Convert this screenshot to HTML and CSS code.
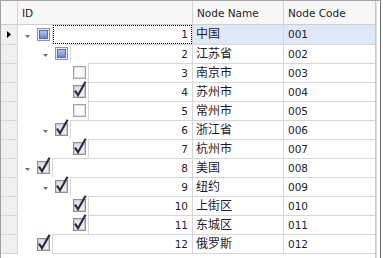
FILE: index.html
```html
<!DOCTYPE html>
<html lang="zh">
	<head>
		<meta charset="UTF-8" />
		<title>Tree List</title>
		<link rel="stylesheet" href="styles.css">
	</head>

	<body>
		<svg class="defs" width="0" height="0">
			<defs>
				<linearGradient id="blue" x1="0" y1="0" x2="0" y2="1">
					<stop offset="0" stop-color="#b4c8f4" />
					<stop offset="1" stop-color="#5f82d6" />
				</linearGradient>
				<linearGradient id="grey" x1="0" y1="0" x2="0" y2="1">
					<stop offset="0" stop-color="#dcdde4" />
					<stop offset="1" stop-color="#f4f4f6" />
				</linearGradient>
			</defs>
			<symbol id="cb-off" viewBox="0 0 13 13" overflow="visible">
				<rect x="0.5" y="0.5" width="12" height="12" fill="#fff" stroke="#a4a4a8" />
				<rect x="1.5" y="1.5" width="10" height="10" fill="#fbfbfb" stroke="#e0e0e2" />
			</symbol>
			<symbol id="cb-on" viewBox="0 0 13 13" overflow="visible">
				<rect x="0.5" y="0.5" width="12" height="12" fill="url(#grey)" stroke="#8e8f9c" />
				<rect x="1.5" y="1.5" width="10" height="10" fill="none" stroke="#cdcdd4" />
				<path d="M2 5.6 L5 10.2 L12.6 -3.2" fill="none" stroke="#2c2c3c" stroke-width="2.2" />
			</symbol>
			<symbol id="cb-mid" viewBox="0 0 13 13" overflow="visible">
				<rect x="0.5" y="0.5" width="12" height="12" fill="#ececf0" stroke="#9294a0" />
				<rect x="2.5" y="2.5" width="8" height="8" fill="url(#blue)" stroke="#4d6cc2" />
			</symbol>
		</svg>

		<div class="frame">
			<div class="grid">
				<div class="head">
					<div class="ind"></div>
					<div class="tree hd">ID</div>
					<div class="name hd">Node Name</div>
					<div class="code hd">Node Code</div>
				</div>

				<div class="row focus">
					<div class="ind">
						<svg class="arrow" width="4" height="7"><polygon points="0,0 4,3.5 0,7" /></svg>
					</div>
					<div class="tree">
						<span class="tog"><svg width="5" height="3"><polygon points="0,0 5,0 2.5,3" /></svg></span>
						<span class="box"><svg width="13" height="13"><use href="#cb-mid" /></svg></span>
						<div class="cell"><span class="val">1</span></div>
					</div>
					<div class="name">中国</div>
					<div class="code">001</div>
				</div>

				<div class="row">
					<div class="ind"></div>
					<div class="tree">
						<span class="pad1"></span>
						<span class="tog"><svg width="5" height="3"><polygon points="0,0 5,0 2.5,3" /></svg></span>
						<span class="box"><svg width="13" height="13"><use href="#cb-mid" /></svg></span>
						<div class="cell">2</div>
					</div>
					<div class="name">江苏省</div>
					<div class="code">002</div>
				</div>

				<div class="row">
					<div class="ind"></div>
					<div class="tree">
						<span class="pad2"></span>
						<span class="tog"></span>
						<span class="box"><svg width="13" height="13"><use href="#cb-off" /></svg></span>
						<div class="cell">3</div>
					</div>
					<div class="name">南京市</div>
					<div class="code">003</div>
				</div>

				<div class="row">
					<div class="ind"></div>
					<div class="tree">
						<span class="pad2"></span>
						<span class="tog"></span>
						<span class="box"><svg width="13" height="13"><use href="#cb-on" /></svg></span>
						<div class="cell">4</div>
					</div>
					<div class="name">苏州市</div>
					<div class="code">004</div>
				</div>

				<div class="row">
					<div class="ind"></div>
					<div class="tree">
						<span class="pad2"></span>
						<span class="tog"></span>
						<span class="box"><svg width="13" height="13"><use href="#cb-off" /></svg></span>
						<div class="cell">5</div>
					</div>
					<div class="name">常州市</div>
					<div class="code">005</div>
				</div>

				<div class="row">
					<div class="ind"></div>
					<div class="tree">
						<span class="pad1"></span>
						<span class="tog"><svg width="5" height="3"><polygon points="0,0 5,0 2.5,3" /></svg></span>
						<span class="box"><svg width="13" height="13"><use href="#cb-on" /></svg></span>
						<div class="cell">6</div>
					</div>
					<div class="name">浙江省</div>
					<div class="code">006</div>
				</div>

				<div class="row">
					<div class="ind"></div>
					<div class="tree">
						<span class="pad2"></span>
						<span class="tog"></span>
						<span class="box"><svg width="13" height="13"><use href="#cb-on" /></svg></span>
						<div class="cell">7</div>
					</div>
					<div class="name">杭州市</div>
					<div class="code">007</div>
				</div>

				<div class="row">
					<div class="ind"></div>
					<div class="tree">
						<span class="tog"><svg width="5" height="3"><polygon points="0,0 5,0 2.5,3" /></svg></span>
						<span class="box"><svg width="13" height="13"><use href="#cb-on" /></svg></span>
						<div class="cell">8</div>
					</div>
					<div class="name">美国</div>
					<div class="code">008</div>
				</div>

				<div class="row">
					<div class="ind"></div>
					<div class="tree">
						<span class="pad1"></span>
						<span class="tog"><svg width="5" height="3"><polygon points="0,0 5,0 2.5,3" /></svg></span>
						<span class="box"><svg width="13" height="13"><use href="#cb-on" /></svg></span>
						<div class="cell">9</div>
					</div>
					<div class="name">纽约</div>
					<div class="code">009</div>
				</div>

				<div class="row">
					<div class="ind"></div>
					<div class="tree">
						<span class="pad2"></span>
						<span class="tog"></span>
						<span class="box"><svg width="13" height="13"><use href="#cb-on" /></svg></span>
						<div class="cell">10</div>
					</div>
					<div class="name">上街区</div>
					<div class="code">010</div>
				</div>

				<div class="row">
					<div class="ind"></div>
					<div class="tree">
						<span class="pad2"></span>
						<span class="tog"></span>
						<span class="box"><svg width="13" height="13"><use href="#cb-on" /></svg></span>
						<div class="cell">11</div>
					</div>
					<div class="name">东城区</div>
					<div class="code">011</div>
				</div>

				<div class="row last">
					<div class="ind"></div>
					<div class="tree">
						<span class="tog"></span>
						<span class="box"><svg width="13" height="13"><use href="#cb-on" /></svg></span>
						<div class="cell">12</div>
					</div>
					<div class="name">俄罗斯</div>
					<div class="code">012</div>
				</div>
			</div>
			<div class="edge"></div>
		</div>
	</body>
</html>
```

FILE: styles.css
```css
* {
	box-sizing: border-box;
	margin: 0;
	padding: 0;
}

body {
	background: #fff;
	font-family: "DejaVu Sans", "Noto Sans CJK SC", sans-serif;
	font-size: 10.5px;
	color: #1c1c2e;
}

.defs {
	position: absolute;
}

.frame {
	display: flex;
	height: 258px;
	width: 381px;
	border-top: 1px solid #a3a3a3;
}

.grid {
	width: 376px;
	border-left: 1px solid #a0a0a0;
	border-right: 1px solid #c3c7d2;
}

.edge {
	width: 5px;
	border-left: 1px solid #e0e3e9;
	border-right: 1px solid #6c6c6c;
}

/* header */
.head {
	display: flex;
	height: 24px;
	background: #f7f7f7;
	border-bottom: 1px solid #cfcfcf;
}

.head > div {
	border-right: 1px solid #d4d4d4;
}

.head .code {
	border-right: none;
}

.hd {
	display: flex;
	align-items: center;
	padding-left: 4px;
}

/* columns */
.ind {
	width: 17px;
	flex: none;
}

.tree {
	width: 175px;
	flex: none;
	display: flex;
	border-right: 1px solid #d6d6d6;
}

.name {
	width: 91px;
	flex: none;
	border-right: 1px solid #d6d6d6;
}

.code {
	width: 91px;
	flex: none;
}

/* rows */
.row {
	display: flex;
	height: 19px;
	line-height: 18px;
}

.row .ind {
	background: #f0f0f3;
	border-right: 1px solid #d6d6d6;
	display: flex;
	align-items: center;
	justify-content: center;
}

.row .name {
	padding-left: 3px;
	font-size: 12px;
}

.row .code {
	padding-left: 4px;
}

.row + .row .ind,
.row + .row .cell,
.row + .row .name,
.row + .row .code {
	border-top: 1px solid #d6d6d6;
}

.row.last {
	height: 20px;
}

.row.last .ind,
.row.last .cell,
.row.last .name,
.row.last .code {
	border-bottom: 1px solid #d6d6d6;
}

.focus .name,
.focus .code {
	background: #dfe8f7;
}

.arrow {
	fill: #000;
	margin-left: -1px;
}

/* tree parts */
.pad1 {
	width: 18px;
	flex: none;
}

.pad2 {
	width: 36px;
	flex: none;
}

.tog {
	width: 18px;
	flex: none;
	display: flex;
	align-items: center;
	justify-content: center;
	padding-top: 3px;
	fill: #6e6e6e;
}

.box {
	width: 16px;
	flex: none;
	display: flex;
	align-items: center;
	padding-left: 1px;
}

.box svg {
	overflow: visible;
}

.cell {
	flex: 1;
	border-left: 1px solid #d6d6d6;
	text-align: right;
	padding-right: 4px;
}

.focus .cell {
	padding-right: 0;
	display: flex;
}

.val {
	flex: 1;
	border: 1px dotted #000;
	padding-right: 3px;
	line-height: 17px;
}
```
